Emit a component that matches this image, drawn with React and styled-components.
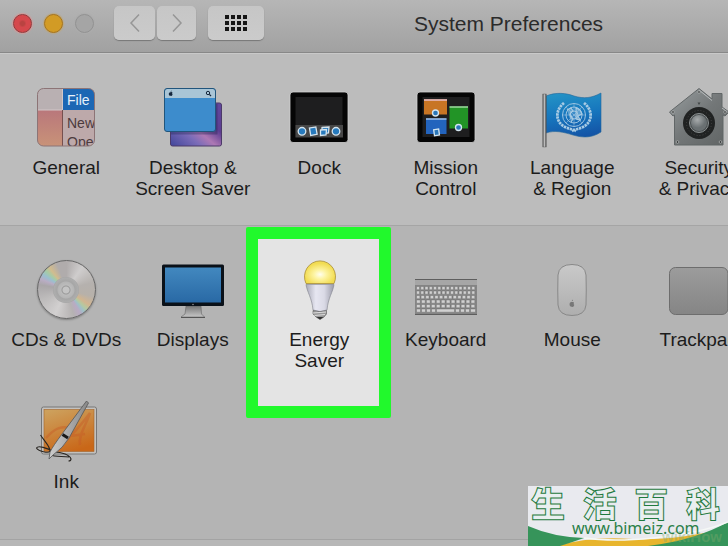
import React from 'react';
import styled, { createGlobalStyle, css } from 'styled-components';

const GlobalStyle = createGlobalStyle`
  *, *::before, *::after { box-sizing: border-box; }
  body {
    margin: 0;
    background: #b4b4b4;
    font-family: "Liberation Sans", Arial, sans-serif;
    color: #1c1c1c;
  }
`;

const Window = styled.div`
  position: relative;
  min-height: 100vh;
  overflow: hidden;
  display: flex;
  flex-direction: column;
`;

const Toolbar = styled.header`
  display: flex;
  align-items: center;
  height: 53px;
  padding: 0 13px 6px;
  background: linear-gradient(#b6b6b6, #a1a1a1);
  border-bottom: 1px solid #888;
`;

const Lights = styled.div`
  display: flex;
  gap: 12px;
  margin-right: 20px;
`;

const Light = styled.button`
  width: 19px;
  height: 19px;
  padding: 0;
  border-radius: 50%;
  border: 1px solid ${(p) => p.$edge};
  background: ${(p) => p.$fill};
  box-shadow: 0 0 1px 1px ${(p) => p.$halo};
`;

const NavGroup = styled.div`
  display: flex;
  gap: 2px;
  margin-right: 12px;
`;

const ToolButton = styled.button`
  display: flex;
  align-items: center;
  justify-content: center;
  width: ${(p) => p.$width};
  height: 34px;
  padding: 0;
  border: 0;
  border-radius: 5px;
  background: linear-gradient(#c6c6c6, #cbcbcb);
  box-shadow: 0 1px 1px #777;
`;

const Title = styled.h1`
  margin: 0 0 0 150px;
  padding-top: 2px;
  font-size: 21px;
  line-height: 24px;
  font-weight: 400;
  color: #2b2b2b;
  white-space: nowrap;
`;

const Section = styled.section`
  display: grid;
  grid-template-columns: repeat(6, minmax(0, 1fr));
  row-gap: 31px;
  margin-right: -34px;
  padding: 34px 0 26px 3px;
  background: ${(p) => p.$tone};
  border-top: 1px solid ${(p) => p.$line};
`;

const Tile = styled.button`
  position: relative;
  display: flex;
  flex-direction: column;
  align-items: center;
  gap: 9px;
  height: 111px;
  padding: 0;
  border: 0;
  background: none;
  font: inherit;
  color: inherit;
  ${(p) =>
    p.$highlighted &&
    css`
      z-index: 1;
      &::before {
        content: '';
        position: absolute;
        inset: -33px -8px -47px -10px;
        z-index: -1;
        border: 12px solid #21f92c;
        border-radius: 2px;
        background: #e4e4e4;
      }
    `}
`;

const Label = styled.span`
  font-size: 19px;
  line-height: 21px;
  text-align: center;
  white-space: pre-line;
`;

const Icon = styled.svg.attrs({ viewBox: '0 0 60 60', 'aria-hidden': true })`
  display: block;
  width: 60px;
  height: 60px;
  overflow: visible;
`;

const Disc = styled.span`
  display: grid;
  place-items: center;
  width: 59px;
  height: 59px;
  margin-bottom: 1px;
  border: 1px solid #666;
  border-radius: 50%;
  background: conic-gradient(
    #b0acac, #cfcdcd 35deg, #b5b1ae 75deg, #b7b1aa 105deg, #d2b590 124deg, #b5c9a0 134deg,
    #9fc0c8 142deg, #b9aac4 150deg, #b5b2b2 165deg, #d2d0d0 205deg, #bcbaba 250deg,
    #a9a6a8 280deg, #b9adc4 292deg, #9bbfd0 302deg, #a6cba6 312deg, #d2bc8e 322deg, #b0acac 340deg
  );
  box-shadow: 0 1px 2px rgba(0, 0, 0, 0.3);
`;

const Hub = styled.span`
  width: 26px;
  height: 26px;
  border-radius: 50%;
  background: radial-gradient(circle, #c4c4c4 3px, #999 4px, #bcbcbc 5px, #b5b5b5 8px, #a6a6a6 9px, #adadad 12px, #a5a5a5 13px);
`;

const Footer = styled.footer`
  flex: 1;
  background: #b7b7b7;
  border-top: 1px solid #a3a3a3;
`;

const Watermark = styled.aside`
  position: absolute;
  right: 0;
  bottom: 0;
  display: flex;
  flex-direction: column;
  width: 200px;
  height: 60px;
  background: #e9eaef;
  overflow: hidden;
`;

const Hills = styled.svg`
  position: absolute;
  inset: 0;
  width: 100%;
  height: 100%;
`;

const SiteName = styled.div`
  position: relative;
  display: flex;
  justify-content: space-between;
  padding: 0 8px 0 3px;
  font: 900 34px/33px "Noto Sans CJK SC", sans-serif;
  color: #e9eff0;
  -webkit-text-stroke: 1px #1f7a3e;
`;

const SiteLink = styled.a`
  position: relative;
  margin-left: 44px;
  font: 400 16px/18px "Noto Sans", sans-serif;
  color: #2b7f48;
  text-decoration: none;
`;

const Ghost = styled.span`
  position: absolute;
  right: 6px;
  bottom: 1px;
  font-size: 15px;
  line-height: 17px;
  font-weight: 700;
  color: rgba(130, 170, 110, 0.4);
`;

const GeneralIcon = () => (
  <Icon>
    <defs>
      <linearGradient id="genBlush" x1="0" y1="0" x2="0" y2="1">
        <stop offset="0" stopColor="#b9777b" />
        <stop offset="1" stopColor="#c99478" />
      </linearGradient>
      <clipPath id="genClip"><rect x="1.5" y="0.5" width="57" height="57.5" rx="6" /></clipPath>
    </defs>
    <g clipPath="url(#genClip)">
      <rect width="60" height="60" fill="#bda9aa" />
      <rect width="27" height="22" fill="#b9b0b2" />
      <rect y="22" width="26" height="38" fill="url(#genBlush)" />
      <rect x="26.5" width="34" height="22" fill="#1c67b4" />
      <path d="M1 22H26.5M26.5 0V22" stroke="#d2c7c8" fill="none" />
      <path d="M26.5 22V59" stroke="#76504f" fill="none" />
      <g fontFamily="Liberation Sans, sans-serif" fontSize="14">
        <text x="31" y="17" fill="#e8f1fa">File</text>
        <text x="31" y="40" fill="#4c3b3e">New</text>
        <text x="31" y="59" fill="#4c3b3e">Ope</text>
      </g>
    </g>
    <rect x="1.5" y="0.5" width="57" height="57.5" rx="6" fill="none" stroke="#8c7476" />
  </Icon>
);

const DesktopIcon = () => (
  <Icon>
    <defs>
      <linearGradient id="deskBack" x1="0" y1="1" x2="1" y2="0">
        <stop offset="0" stopColor="#40459a" />
        <stop offset=".3" stopColor="#7b6cb8" />
        <stop offset=".45" stopColor="#ad78b4" />
        <stop offset=".65" stopColor="#5d3d91" />
        <stop offset="1" stopColor="#62489d" />
      </linearGradient>
    </defs>
    <rect x="7.5" y="15" width="51" height="43" rx="2" fill="url(#deskBack)" stroke="#4c3a69" />
    <path d="M8 45H53V16" fill="none" stroke="#1a204b" strokeOpacity=".35" strokeWidth="3" />
    <rect x="1.5" y="0.5" width="51" height="43" rx="2.5" fill="#3d8ccc" />
    <path d="M2 10V3Q2 1 4 1H50Q52 1 52 3V10Z" fill="#a9c5d6" />
    <rect x="1.5" y="0.5" width="51" height="43" rx="2.5" fill="none" stroke="#21557c" />
    <path d="M7.5 4.3Q9 3.5 9.5 4.8Q8.600 5.7 9.600 6.6Q9 8.3 7.7 7.8Q6 8.2 5.7 6Q6 4 7.5 4.3M7.6 3.9Q7.6 2.7 8.7 2.5Q8.6 3.7 7.6 3.9" fill="#15273d" />
    <circle cx="45" cy="5" r="1.7" fill="none" stroke="#15273d" />
    <path d="M46.3 6.3L48 8" stroke="#15273d" strokeWidth="1.2" />
  </Icon>
);

const ScreenFrame = () => (
  <>
    <rect x="1" y="4" width="58" height="50.5" rx="3" fill="#050505" stroke="#d0d0d0" strokeWidth=".8" />
    <rect x="6.5" y="9" width="47" height="40" fill="#1e1e1f" />
  </>
);

const DockIcon = () => (
  <Icon>
    <ScreenFrame />
    <rect x="6.5" y="37" width="47.5" height="12.5" fill="#474747" />
    <g fill="#277abd" stroke="#d6e5ee" strokeWidth="1.3">
      <circle cx="13" cy="43.3" r="3.8" />
      <circle cx="47" cy="43.3" r="3.8" />
      <rect x="21" y="39.5" width="6.5" height="7.500" transform="rotate(-10 24 43)" />
      <path d="M33 39.5L40 39L39.5 45L33 45.500Z" />
      <path d="M31.500 42L37.500 41.5L37 47L31.500 47.500Z" />
    </g>
  </Icon>
);

const MissionIcon = () => (
  <Icon>
    <ScreenFrame />
    <rect x="8" y="11.5" width="23" height="15" fill="#c87524" />
    <rect x="10" y="30.5" width="20.5" height="15.5" fill="#2364bd" />
    <rect x="33.5" y="18.5" width="18.5" height="22" fill="#229426" />
    <path d="M8 12H31" stroke="#e8bcc0" strokeWidth="1.6" />
    <path d="M10 31H30.5" stroke="#a9c8ec" strokeWidth="1.4" />
    <path d="M33.5 19H52" stroke="#a6dda8" strokeWidth="1.4" />
    <g fill="#2a76b8" stroke="#d5e6f0" strokeWidth="1.3">
      <circle cx="19.5" cy="25" r="3" />
      <circle cx="42.5" cy="39.5" r="3" />
      <rect x="18" y="41.5" width="5" height="6" transform="rotate(-8 20 44)" />
    </g>
  </Icon>
);

const FlagIcon = () => (
  <Icon>
    <defs>
      <linearGradient id="flagBlue" x1=".4" y1="0" x2=".6" y2="1">
        <stop offset="0" stopColor="#2391c5" />
        <stop offset=".5" stopColor="#1675bd" />
        <stop offset="1" stopColor="#1454a6" />
      </linearGradient>
      <linearGradient id="pole"><stop stopColor="#555" /><stop offset=".5" stopColor="#bbb" /><stop offset="1" stopColor="#444" /></linearGradient>
    </defs>
    <path d="M4 8C14 4 24 5 32 8C42 11 50 10 59 5V44C50 50 41 50 31 47C21 44 13 42 4 45Z" fill="url(#flagBlue)" stroke="#23669a" strokeWidth=".6" />
    <rect x="0.8" y="6" width="3.4" height="53" fill="url(#pole)" stroke="#555" strokeWidth=".4" />
    <g fill="none" stroke="#a8cbe4">
      <circle cx="32" cy="27" r="11.5" strokeWidth=".9" />
      <circle cx="32" cy="27" r="8" strokeWidth=".9" />
      <circle cx="32" cy="27" r="4" strokeWidth=".9" />
      <path d="M20.5 27H43.5M32 15.5V38.5M24 19L40 35M40 19L24 35" strokeWidth=".5" />
      <path d="M22 15C13 22 13 34 23 39C27 41 30 41 34 43M42 15C51 22 51 34 41 39C37 41 34 41 30 43" strokeWidth="2.8" strokeDasharray="2.4 .7" />
      <path d="M25 22L29 20L31 23L28 26L31 31L29 34M34 20L38 22L40 26L36 28L38 32L34 31L34 25Z" fill="#a8cbe4" fillOpacity=".5" strokeWidth="1.2" />
    </g>
  </Icon>
);

const SecurityIcon = () => (
  <Icon>
    <defs>
      <linearGradient id="steel" x1="0" y1="0" x2="1" y2="1">
        <stop offset="0" stopColor="#999fa1" /><stop offset=".5" stopColor="#737778" /><stop offset="1" stopColor="#606464" />
      </linearGradient>
      <radialGradient id="knob" cx=".4" cy=".3"><stop stopColor="#a7abac" /><stop offset="1" stopColor="#6a7072" /></radialGradient>
    </defs>
    <path d="M30 .5L43 11V5.5H53V19L60 24L56 28L54 27V57H5.5V27L4 28L.5 24Z" fill="url(#steel)" stroke="#616667" />
    <path d="M30 2L43 12.5M53 20L58.5 24" stroke="#b8bcbd" fill="none" />
    <circle cx="30" cy="35" r="16" fill="#202222" />
    <circle cx="30" cy="35" r="12.5" fill="none" stroke="#444" strokeDasharray="1 2" />
    <circle cx="30" cy="35" r="9.5" fill="#4a4f50" stroke="#8b9091" />
    <circle cx="30" cy="35" r="8" fill="url(#knob)" />
    <path d="M28.5 14.5H31.5L30 17Z" fill="#424647" />
    {[[30, 4], [4, 24], [56, 24], [8.5, 54], [51.5, 54]].map(([x, y]) => (
      <circle key={`${x}-${y}`} cx={x} cy={y} r="1.3" fill="#303333" stroke="#b7baba" strokeWidth=".7" />
    ))}
  </Icon>
);

const DisplayIcon = () => (
  <Icon>
    <defs>
      <linearGradient id="screen" x1="0" y1="0" x2="0" y2="1"><stop stopColor="#4288bf" /><stop offset="1" stopColor="#2969a5" /></linearGradient>
      <linearGradient id="stand" x1="0" y1="0" x2="0" y2="1"><stop stopColor="#777" /><stop offset="1" stopColor="#c6c6c6" /></linearGradient>
    </defs>
    <path d="M23 46H38L38.5 54L41.5 57H18L22 54Z" fill="url(#stand)" stroke="#666" strokeWidth=".6" />
    <path d="M18 57.5H42" stroke="#555" />
    <rect x="-1" y="4.5" width="62" height="41.5" rx="1.5" fill="#0a1119" />
    <rect x="2" y="7.5" width="56" height="35" fill="url(#screen)" />
    <circle cx="30" cy="44.5" r=".7" fill="#aaa" />
  </Icon>
);

const BulbIcon = () => (
  <Icon>
    <defs>
      <radialGradient id="glow" cy=".6"><stop stopColor="#fffef0" /><stop offset=".4" stopColor="#fdf4a2" /><stop offset="1" stopColor="#f2dc52" /></radialGradient>
      <linearGradient id="neck"><stop stopColor="#a9aab7" /><stop offset=".35" stopColor="#e6e6f1" /><stop offset=".65" stopColor="#dadae6" /><stop offset="1" stopColor="#9a9ba9" /></linearGradient>
    </defs>
    <path d="M17 24.5C18 32 23 38 24 50Q31 53 38 50C39 38 44 32 45 24.5Z" fill="url(#neck)" stroke="#80818b" strokeWidth=".6" />
    <path d="M17 24.5A15.5 15.800 0 1 1 45 24.5Z" transform="translate(0 -1)" fill="url(#glow)" stroke="#a88d31" strokeWidth=".8" />
    <path d="M24 50.5Q31 53 37.5 50.5V54L35 57L31 59.5L27 57L24 54Z" fill="#999" stroke="#555" strokeWidth=".6" />
    <path d="M24 53L37 52M25.5 55.5L36 54.5" stroke="#ddd" />
    <path d="M27.5 57H34.5L31 59.5Z" fill="#333" />
  </Icon>
);

const keyRows = [
  { y: 26.5, count: 14 },
  { y: 31, count: 14 },
  { y: 35.5, count: 13 },
  { y: 40, count: 12 },
  { y: 44.5, count: 12 },
];

const KeyboardIcon = () => (
  <Icon>
    <rect x="-1" y="19" width="62" height="36" fill="#848484" />
    <rect x="-1" y="20" width="62" height="5" fill="#a6a6a6" />
    <path d="M-1 19.5H61M-1 54.5H61" stroke="#5e5e5e" />
    {keyRows.map(({ y, count }) =>
      Array.from({ length: count }, (_, i) => (
        <rect key={`${y}-${i}`} x={0.5 + (i * 59.5) / count} y={y} width={59.5 / count - 1.2} height="3.2" rx=".5" fill="#d1d1d1" stroke="#666" strokeWidth=".4" />
      ))
    )}
    {[[0.5, 4], [5.5, 4], [10.5, 4], [15.5, 4], [20.5, 18], [39.5, 4], [44.5, 4], [49.5, 4], [54.5, 5]].map(([x, w]) => (
      <rect key={x} x={x} y="49" width={w} height="3.2" rx=".5" fill="#d1d1d1" stroke="#666" strokeWidth=".4" />
    ))}
  </Icon>
);

const MouseIcon = () => (
  <Icon>
    <defs><linearGradient id="mouse" x1="0" y1="0" x2="0" y2="1"><stop stopColor="#c9c9c9" /><stop offset="1" stopColor="#aeaeae" /></linearGradient></defs>
    <path d="M30 4.5Q43 4.5 44 15Q44.500 30 44 45Q43 55.5 30 55.5Q17 55.5 16 45Q15.500 30 16 15Q17 4.5 30 4.5Z" fill="url(#mouse)" stroke="#888" />
    <path d="M30 42Q32 41.5 32 43Q31 44 32.3 45Q31.5 47.5 30 46.7Q27.5 47.5 27.5 44Q27.8 41.5 30 42M29.700 41.5Q29.700 40 31 39.5Q31.2 41 29.700 41.5" fill="#777" />
  </Icon>
);

const TrackpadIcon = () => (
  <Icon>
    <defs><linearGradient id="pad" x1="0" y1="0" x2="0" y2="1"><stop stopColor="#9c9c9c" /><stop offset="1" stopColor="#858585" /></linearGradient></defs>
    <rect x="0.5" y="7.5" width="58.5" height="47" rx="6" fill="url(#pad)" stroke="#6d6d6d" />
  </Icon>
);

const InkIcon = () => (
  <Icon>
    <defs>
      <linearGradient id="ink" x1=".2" y1="0" x2=".6" y2="1"><stop stopColor="#cda05c" /><stop offset="1" stopColor="#c96718" /></linearGradient>
      <linearGradient id="pen"><stop stopColor="#ccc" /><stop offset="1" stopColor="#888" /></linearGradient>
    </defs>
    <rect x="5.5" y="5" width="55" height="47" rx="2" fill="#c3c1be" stroke="#777" />
    <rect x="8" y="7.5" width="50" height="42" fill="url(#ink)" stroke="#a4652b" strokeWidth=".6" />
    <path d="M10 36C20 25 26 24 35 26M25 43C38 32 48 19 54 11C50 23 42 34 44 43M34 34L49 32" fill="none" stroke="#c65825" strokeWidth="2.5" opacity=".4" />
    <path d="M4.5 33C9 40 14 44 14 49C13 52 2 49 .5 46C2 43 11 46 18 50C26 50 34 53 35 57Q35 59 32.5 59M14 53C20 55 26 54 33 55" fill="none" stroke="#292622" strokeWidth="1.1" />
    <path d="M50.500 -1L52.500 1L33 36Q27 46 17 53L13 57L14 50Q17 44 26 32Z" fill="url(#pen)" stroke="#555" strokeWidth=".8" />
    <path d="M26.500 32.500L32 36" stroke="#171717" strokeWidth="3" />
  </Icon>
);

const DiscIcon = () => <Disc><Hub /></Disc>;

const personal = [
  { label: 'General', Art: GeneralIcon },
  { label: 'Desktop &\nScreen Saver', Art: DesktopIcon },
  { label: 'Dock', Art: DockIcon },
  { label: 'Mission\nControl', Art: MissionIcon },
  { label: 'Language\n& Region', Art: FlagIcon },
  { label: 'Security\n& Privacy', Art: SecurityIcon },
];

const hardware = [
  { label: 'CDs & DVDs', Art: DiscIcon },
  { label: 'Displays', Art: DisplayIcon },
  { label: 'Energy\nSaver', Art: BulbIcon, highlighted: true },
  { label: 'Keyboard', Art: KeyboardIcon },
  { label: 'Mouse', Art: MouseIcon },
  { label: 'Trackpad', Art: TrackpadIcon },
  { label: 'Ink', Art: InkIcon },
];

const Panel = ({ items, ...tones }) => (
  <Section {...tones}>
    {items.map(({ label, Art, highlighted }) => (
      <Tile key={label} type="button" $highlighted={highlighted}>
        <Art />
        <Label>{label}</Label>
      </Tile>
    ))}
  </Section>
);

const Chevron = ({ d }) => (
  <svg width="12" height="20" viewBox="0 0 12 20" aria-hidden="true">
    <path d={d} fill="none" stroke="#969696" strokeWidth="1.5" />
  </svg>
);

export default function App() {
  return (
    <Window>
      <GlobalStyle />
      <Toolbar>
        <Lights>
          <Light type="button" aria-label="Close" $fill="radial-gradient(circle, #b94341 2px, #d5484c 4px)" $edge="#973638" $halo="#d19a9a" />
          <Light type="button" aria-label="Minimize" $fill="#d29b25" $edge="#a57420" $halo="#b9a782" />
          <Light type="button" aria-label="Zoom" $fill="#a5a5a5" $edge="#929292" $halo="#acacac" />
        </Lights>
        <NavGroup>
          <ToolButton type="button" aria-label="Back" $width="41px"><Chevron d="M10 1.5L2 10L10 18.5" /></ToolButton>
          <ToolButton type="button" aria-label="Forward" $width="39px"><Chevron d="M2 1.5L10 10L2 18.5" /></ToolButton>
        </NavGroup>
        <ToolButton type="button" aria-label="Show all" $width="56px">
          <svg width="22" height="16" viewBox="0 0 22 16" aria-hidden="true">
            {[0, 6, 12, 18].map((x) => [0, 6, 12].map((y) => (
              <rect key={`${x}-${y}`} x={x} y={y} width="4" height="4" fill="#151515" />
            )))}
          </svg>
        </ToolButton>
        <Title>System Preferences</Title>
      </Toolbar>
      <Panel items={personal} $tone="#bcbcbc" $line="#c9c9c9" />
      <Panel items={hardware} $tone="#b4b4b4" $line="#a5a5a5" />
      <Footer />
      <Watermark>
        <Hills viewBox="0 0 200 60" preserveAspectRatio="none" aria-hidden="true">
          <path d="M30 60Q60 50 105 53Q145 55 200 42V60Z" fill="#e8b52d" />
          <path d="M0 40Q25 51 56 52Q45 56 32 60H0Z" fill="#36945a" />
          <path d="M120 60Q168 54 200 36V60Z" fill="#36945a" />
          <path d="M56 52Q85 56 125 52Q170 48 200 36" fill="none" stroke="#f5f8f6" strokeWidth="1.5" />
        </Hills>
        <SiteName>
          <span>生</span><span>活</span><span>百</span><span>科</span>
        </SiteName>
        <Ghost>wikiHow</Ghost>
        <SiteLink href="#">www.bimeiz.com</SiteLink>
      </Watermark>
    </Window>
  );
}
